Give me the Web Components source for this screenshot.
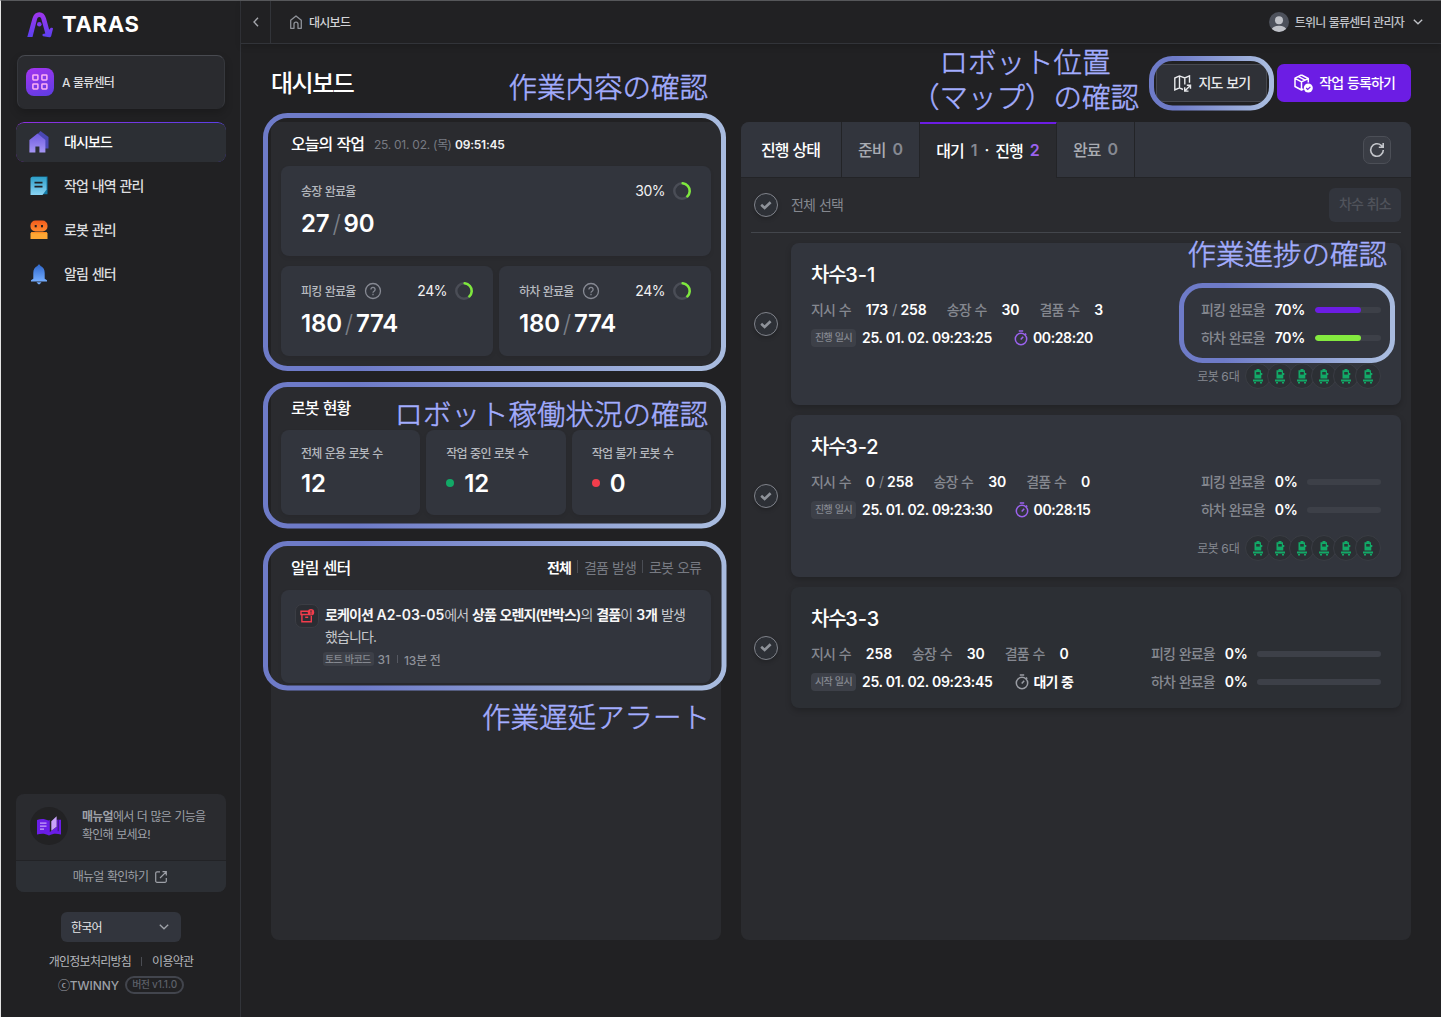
<!DOCTYPE html>
<html lang="ko">
<head>
<meta charset="utf-8">
<title>TARAS</title>
<style>
  * { box-sizing: border-box; letter-spacing: -0.062em; word-spacing: 0.06em; }
  .n { letter-spacing: -0.02em; word-spacing: 0; }
  body {
    margin: 0;
    width: 1441px;
    height: 1017px;
    overflow: hidden;
    background: #212123;
    color: #fff;
    font-family: Inter, 'Noto Sans CJK KR', sans-serif;
  }
</style>
</head>
<body>
<taras-app></taras-app>

<script>
// .n is for digits and latin, .t lifts a text a pixel inside a centred row
const BASE = `
  * { box-sizing: border-box; letter-spacing: -0.062em; word-spacing: 0.06em; }
  .n { letter-spacing: -0.005em; word-spacing: 0; }
  .t { margin-top: -2px; }
  svg { display: block; }
`;

const ICONS = {
  logo: `<svg width="27" height="26" viewBox="0 0 27 26"><defs><linearGradient id="g" x1="0" y1="0" x2="0" y2="1"><stop offset="0" stop-color="#a234ee"/><stop offset="1" stop-color="#5a41f0"/></linearGradient></defs>
    <path d="M.3 25 5.500 6.200C6.600 2.300 8.900.2 12.300.2s5.600 2.100 6.700 6l3.200 11.600 1.400-1.900c.8-.4 2.600 0 2.400.9l-1.800 7.300c-.3.9-.9 1.200-1.800 1.200l-6.200-1.100c-.9-.3-1-1.500-.3-2.100l2.400-.7L14.700 8.200C14.200 6.100 13.600 5 12.300 5s-2 1.100-2.500 3.200L5.500 25z" fill="url(#g)"/><circle cx="12.300" cy="12.300" r="2.300" fill="#7a3af0"/></svg>`,
  grid: `<svg width="16" height="16" viewBox="0 0 16 16" fill="none" stroke="#ffb0f4" stroke-width="1.500"><rect x=".9" y=".9" width="5" height="5" rx=".7"/><rect x="9.900" y=".9" width="5" height="5" rx=".7"/><rect x=".9" y="9.900" width="5" height="5" rx=".7"/><rect x="9.900" y="9.900" width="5" height="5" rx=".7"/></svg>`,
  house: `<svg width="20" height="22" viewBox="0 0 20 22"><defs><linearGradient id="g" x1="0" y1="0" x2="0" y2="1"><stop offset="0" stop-color="#6f5be0"/><stop offset="1" stop-color="#a596f4"/></linearGradient></defs><path d="M11.500 0 19.500 6v11.500h-6L5 7z" fill="#4a48b4"/><path d="M8.500 2.500.4 9v12.500h6V15.500h4v6h6V9z" fill="url(#g)"/></svg>`,
  memo: `<svg width="18" height="20" viewBox="0 0 18 20"><defs><linearGradient id="g" x1="0" y1="0" x2="0" y2="1"><stop offset="0" stop-color="#2e9fc8"/><stop offset="1" stop-color="#8ad4f4"/></linearGradient></defs><path d="M2 .5h15.500v17.800h-6z" fill="#147ba6"/><path d="M1.500 1h15v12.500l-4 5.500H.5V2z" fill="url(#g)"/><path d="M4.500 6.700h8M4.500 10.700h8" stroke="#202124" stroke-width="1.700"/></svg>`,
  bot: `<svg width="18" height="20" viewBox="0 0 18 20"><defs><linearGradient id="g" x1="0" y1="0" x2="0" y2="1"><stop offset="0" stop-color="#f25b1c"/><stop offset="1" stop-color="#ff8a30"/></linearGradient></defs><rect x=".5" y=".5" width="17" height="11" rx="5" fill="url(#g)"/><path d="M1.500 12h15l1 1.500v5.500H.5v-5.500z" fill="#ffa834"/><path d="M1.500 12h15v1.300h-15z" fill="#ff8c24"/><rect x="4.700" y="5" width="2" height="2.300" fill="#222"/><rect x="11" y="5" width="2" height="2.300" fill="#222"/></svg>`,
  bell: `<svg width="18" height="21" viewBox="0 0 18 21"><defs><linearGradient id="g" x1="0" y1="0" x2="0" y2="1"><stop offset="0" stop-color="#2f67cb"/><stop offset="1" stop-color="#74adff"/></linearGradient></defs><path d="M9 .5c.8 0 1.200.6 1.300 1.300 2.900 1.400 4.400 3.800 4.400 7v6l2.300 1.500v1.200H1v-1.200l2.300-1.500v-6c0-3.200 1.500-5.600 4.400-7C7.800 1.100 8.200.5 9 .5z" fill="url(#g)"/><path d="M6.500 18.300h5L9.700 20.300H8.300z" fill="#74adff"/></svg>`,
  book: `<svg width="24" height="20" viewBox="0 0 24 20"><path d="M0 4C4 2.500 8 2.800 11.500 4.600L12.800 4V16L19.500 11V3.700H24V18.400c-5-1-8-1-12 1.200-4-2.200-7-2.200-12-1.200z" fill="#6a1de6"/><path d="M21.200 3.700v11.500" stroke="#2b1550" stroke-width=".8"/><path d="M14.300 5.200 19.600.3v10.500l-5.300 4z" fill="#c9a3fa"/><path d="M3 7.200h6.500M3 10.200h6.500M3 13.200h4" stroke="#c9a3fa" stroke-width="1.200"/></svg>`,
  external: `<svg width="12" height="12" viewBox="0 0 12 12" fill="none" stroke="currentColor" stroke-width="1.200"><path d="M5 .8H2A1.300 1.300 0 0 0 .7 2v8A1.300 1.300 0 0 0 2 11.300h8a1.300 1.300 0 0 0 1.300-1.300V7M7.500.7h3.800v3.800M11.200.8 5 7"/></svg>`,
  down: `<svg width="10" height="6" viewBox="0 0 10 6" fill="none" stroke="currentColor" stroke-width="1.300"><path d="m.8.8 4.200 4 4.200-4"/></svg>`,
  left: `<svg width="6" height="10" viewBox="0 0 6 10" fill="none" stroke="currentColor" stroke-width="1.400"><path d="M5 .8 1 5l4 4.200"/></svg>`,
  home: `<svg width="12" height="14" viewBox="0 0 12 14" fill="none" stroke="currentColor" stroke-width="1.300" stroke-linejoin="round"><path d="M.7 5.300 6 .9l5.300 4.400v8H8V9.200a2 2 0 0 0-4 0v4.100H.7z"/></svg>`,
  user: `<svg width="20" height="20" viewBox="0 0 20 20"><clipPath id="c"><circle cx="10" cy="10" r="10"/></clipPath><g clip-path="url(#c)"><path d="M0 0h20v20H0z" fill="#4d515b"/><circle cx="10" cy="8.300" r="4" fill="#c0c2c8"/><ellipse cx="10" cy="18" rx="7.500" ry="4.300" fill="#c0c2c8"/></g></svg>`,
  map: `<svg width="18" height="17" viewBox="0 0 18 17" fill="none" stroke="#e8e9ec" stroke-width="1.400"><path d="M9 14.500 5.500 12.800.8 15V3L5.500.9 10.800 3 15.500.9V7.800M5.500 1v12M10.800 3v6.500M11 15.800l5.300-5.300M12.800 10.300h3.700v3.500M10.700 12.300v3.800h3.800"/></svg>`,
  box: `<svg width="19" height="19" viewBox="0 0 19 19"><g fill="none" stroke="#fff" stroke-width="1.500" stroke-linejoin="round"><path d="m7.500 1-6.500 3.200v8.300L7.500 16l2-1M7.500 1l6.800 3.500v4M1 4.300l6.500 3.500 6.800-3.300M7.500 7.800V16M4.500 2.700l6.700 3.500"/></g><circle cx="14.300" cy="14" r="4.500" fill="#fff"/><path d="m12.200 14 1.500 1.500 2.700-2.700" fill="none" stroke="#6c1de4" stroke-width="1.200"/></svg>`,
  help: `<svg width="18" height="18" viewBox="0 0 18 18" fill="none" stroke="#868993" stroke-width="1.300"><circle cx="9" cy="9" r="7.500"/><path d="M6.900 7.400a2.100 2.100 0 1 1 3.200 1.800c-.7.500-1.100.8-1.100 1.600"/><path d="M9 11.800v1.400"/></svg>`,
  refresh: `<svg width="16" height="16" viewBox="0 0 16 16" fill="none" stroke="#c3c5ca" stroke-width="1.600"><path d="M14.300 8A6.300 6.300 0 1 1 12.200 3.300L14 5M14.200 1v4.300H9.800"/></svg>`,
  check: `<svg width="12" height="9" viewBox="0 0 12 9" fill="none" stroke="#8e9299" stroke-width="2.600"><path d="m1.200 3.800 3.400 3.200 6-5.800"/></svg>`,
  timer: `<svg width="14" height="16" viewBox="0 0 14 16" fill="none" stroke="currentColor" stroke-width="1.500"><circle cx="7" cy="9" r="5.700"/><path d="M4.800 1h4.400M6.700 9.500l2.500-2.700M11 3.500l1.200 1.200"/></svg>`,
  missing: `<svg width="15" height="14" viewBox="0 0 15 14" fill="none" stroke="#f23d4c" stroke-width="1.400"><path d="M8 2.200H1v3.300h9M1.900 5.500v7.300h9.400V7M5.200 8.200h3"/><circle cx="11" cy="3.300" r="3.200" fill="#f23d4c" stroke="none"/><path d="M11 1.300v2.300M11 4.400v1" stroke="#2b2d33" stroke-width="1"/></svg>`,
  robot: `<svg width="10" height="15" viewBox="0 0 10 15"><path d="M3.500 0h3v1.200H8v2.800h1.300V6H8.300v3.500H1.500V1.200h2zM0 10.500h10v2H0zM1 13h2v1.500H1zM7 13h2v1.500H7z" fill="#12a967"/><path d="M3.200 3h3.600v2.600H3.200z" fill="#263a36"/></svg>`
};

// every element renders once from its own attributes and slots
class Base extends HTMLElement {
  connectedCallback() {
    if (this.shadowRoot) return;
    this.attachShadow({ mode: 'open' });
    this.shadowRoot.innerHTML = `<style>${BASE}${this.css()}</style>${this.html()}`;
  }
  css() { return ''; }
  html() { return '<slot></slot>'; }
  at(name, fallback = '') { return this.getAttribute(name) || fallback; }
}

class UiIcon extends Base {
  css() { return ':host { display: block; flex: none; }'; }
  html() { return ICONS[this.at('name')]; }
}

class NavItem extends Base {
  css() {
    return `
      :host { display: flex; align-items: center; height: 40px; padding-left: 13px; border-radius: 8px; font-size: 14px; font-weight: 500; color: #dcdddf; position: relative; }
      :host([active]) { background: #2c2f34; color: #fff; overflow: hidden; }
      :host([active])::before { content: ''; position: absolute; inset: 0; border-radius: 8px; padding-top: 1px; background: linear-gradient(90deg, #8f2fe0, #5b3fe6);
        mask: linear-gradient(#000 0 0) content-box exclude, linear-gradient(#000 0 0); }
      .ic { width: 20px; display: flex; justify-content: center; margin-right: 15px; }
    `;
  }
  html() { return `<span class="ic"><ui-icon name="${this.at('icon')}"></ui-icon></span><span class="t"><slot></slot></span>`; }
}

class SideBar extends Base {
  css() {
    return `
      :host { display: flex; flex-direction: column; width: 240px; border-right: 1px solid #323439; padding: 10px 14px 0 15px; }
      .brand { display: flex; align-items: center; height: 27px; margin-left: 11px; gap: 8px; }
      .word { font: 700 22px/26px Inter, sans-serif; letter-spacing: 0.7px; margin-top: -2px; }
      .site { display: flex; align-items: center; height: 54px; margin: 17px 1px 0; padding-left: 8px; gap: 8px; border: 1px solid #36383d; border-top-color: #484a50; border-bottom-color: #2b2c30; border-radius: 8px;
        background: #2a2b2f; font-size: 12px; font-weight: 500; color: #dcdddf; box-shadow: 0 4px 8px #0003; }
      .sq { width: 28px; height: 28px; border-radius: 8px; display: grid; place-items: center; background: linear-gradient(160deg, #a534f0, #5b3de2); }
      nav { display: flex; flex-direction: column; gap: 4px; margin-top: 13px; }
      .fill { flex: 1; }
      .manual { border-radius: 8px; overflow: hidden; background: #2a2b2f; font-size: 12px; color: #9da0a7; }
      .top { display: flex; align-items: center; height: 66px; padding-left: 14px; gap: 14px; line-height: 18px; padding-bottom: 2px; }
      .disc { width: 38px; height: 38px; border-radius: 50%; background: #222224; display: grid; place-items: center; }
      .more { height: 32px; border-top: 1px solid #222326; background: #2c2f34; display: flex; align-items: center; justify-content: center; gap: 7px; padding-right: 2px; }
      .lang { align-self: center; width: 120px; height: 30px; margin: 20px 0 0; padding: 0 12px 0 10px; border-radius: 6px; background: #32353d; display: flex; align-items: center; justify-content: space-between; font-size: 12px; color: #e4e5e7; }
      .lang ui-icon { color: #a0a3aa; }
      .links { display: flex; justify-content: center; align-items: center; gap: 10px; height: 18px; margin-top: 10px; font-size: 12px; color: #b4b6bb; }
      .links i { width: 1px; height: 9px; background: #4a4c52; }
      .foot { display: flex; justify-content: center; align-items: center; gap: 6px; height: 18px; margin: 6px 0 23px; font-size: 12px; color: #9c9fa6; font-weight: 500; }
      .pill { height: 18px; line-height: 13px; padding: 0 5px; border: 2px solid #42454d; border-radius: 9px; font-size: 10px; color: #5d6069; }
    `;
  }
  html() {
    return `
      <div class="brand"><ui-icon name="logo"></ui-icon><span class="word">TARAS</span></div>
      <div class="site"><span class="sq"><ui-icon name="grid"></ui-icon></span><span class="t">A 물류센터</span></div>
      <nav>
        <nav-item icon="house" active>대시보드</nav-item>
        <nav-item icon="memo">작업 내역 관리</nav-item>
        <nav-item icon="bot">로봇 관리</nav-item>
        <nav-item icon="bell">알림 센터</nav-item>
      </nav>
      <div class="fill"></div>
      <div class="manual">
        <div class="top"><span class="disc"><ui-icon name="book"></ui-icon></span><span><b>매뉴얼</b>에서 더 많은 기능을<br>확인해 보세요!</span></div>
        <div class="more"><span class="t">매뉴얼 확인하기</span><ui-icon name="external"></ui-icon></div>
      </div>
      <div class="lang"><span class="t">한국어</span><ui-icon name="down"></ui-icon></div>
      <div class="links"><span class="t">개인정보처리방침</span><i></i><span class="t">이용약관</span></div>
      <div class="foot"><span class="n t">ⓒTWINNY</span><span class="pill">버전 <span class="n">v1.1.0</span></span></div>
    `;
  }
}

class TopBar extends Base {
  css() {
    return `
      :host { display: flex; align-items: center; height: 43px; border-bottom: 1px solid #323439; box-shadow: 0 3px 6px #0002; font-size: 12px; font-weight: 500; color: #d3d4d7; flex: none; }
      .back { width: 30px; height: 42px; border-right: 1px solid #323439; display: grid; place-items: center; color: #a5a7ad; }
      .crumb { display: flex; align-items: center; gap: 7px; margin-left: 19px; }
      .crumb ui-icon { color: #8f9299; }
      .me { margin-left: auto; display: flex; align-items: center; gap: 6px; margin-right: 18px; color: #c0c2c7; }
      .me ui-icon:last-child { margin-left: 3px; }
    `;
  }
  html() {
    return `
      <div class="back"><ui-icon name="left"></ui-icon></div>
      <div class="crumb"><ui-icon name="home"></ui-icon><span class="t">대시보드</span></div>
      <div class="me"><ui-icon name="user"></ui-icon><span class="t">트위니 물류센터 관리자</span><ui-icon name="down"></ui-icon></div>
    `;
  }
}

class UiButton extends Base {
  css() {
    return `
      :host { display: flex; align-items: center; height: 38px; border-radius: 7px; font-size: 14px; font-weight: 500; padding: 0 16px 0 17px; gap: 6px; background: #2f3137; border: 1px solid #46484f; color: #e8e9eb; }
      :host([primary]) { background: #6c1de4; border: 0; color: #fff; }
    `;
  }
  html() { return `<ui-icon name="${this.at('icon')}"></ui-icon><span class="t"><slot></slot></span>`; }
}

class PanelBox extends Base {
  css() {
    return `
      :host { display: flex; flex-direction: column; background: #2a2b2f; border-radius: 8px; padding: 0 10px 10px; }
      header { display: flex; align-items: center; height: 44px; padding: 0 10px 2px; gap: 10px; font-size: 16px; font-weight: 500; flex: none; }
      :host([tall]) header { height: 45px; }
      .right { margin-left: auto; }
    `;
  }
  html() { return `<header><span>${this.at('heading')}</span><slot name="sub"></slot><span class="right"><slot name="tools"></slot></span></header><slot></slot>`; }
}

class PercentRing extends Base {
  css() { return ':host { display: flex; align-items: center; gap: 8px; font-size: 14px; line-height: 18px; } .n { letter-spacing: -0.035em; }'; }
  html() {
    const v = +this.at('value');
    const len = 2 * Math.PI * 7.7;
    return `<span class="n">${v}%</span><svg width="18" height="18" viewBox="0 0 18 18" fill="none" stroke-width="2.500"><circle cx="9" cy="9" r="7.700" stroke="#4a4d56"/>
      <circle cx="9" cy="9" r="7.700" stroke="#7ee83c" stroke-linecap="round" stroke-dasharray="${len * this.at('arc')} 99" transform="rotate(-85 9 9)"/></svg>`;
  }
}

class StatTile extends Base {
  css() {
    return `
      :host { display: block; flex: 1; min-width: 0; background: #32353d; border-radius: 8px; padding: 15px 20px 0; height: 90px; box-shadow: 0 2px 4px #0001; }
      :host([short]) { height: 85px; padding-top: 13px; }
      .row { display: flex; align-items: center; height: 20px; font-size: 12px; color: #b5b8be; font-weight: 500; gap: 8px; }
      percent-ring { margin-left: auto; color: #f2f2f3; font-weight: 400; }
      .num { display: flex; align-items: center; height: 30px; margin-top: 7px; font-size: 24px; font-weight: 600; }
      .num * { letter-spacing: -0.008em; }
      :host([short]) .num { margin-top: 5px; }
      em { font-style: normal; font-weight: 300; color: #7c8089; padding: 0 3px; }
      .dot { width: 8px; height: 8px; border-radius: 50%; margin: 0 10px 0 0; }
    `;
  }
  html() {
    const [a, b] = this.at('value').split('/');
    const dot = this.at('dot');
    return `
      <div class="row"><span class="t">${this.at('label')}</span>${this.hasAttribute('help') ? '<ui-icon name="help"></ui-icon>' : ''}
        ${this.at('percent') ? `<percent-ring value="${this.at('percent')}" arc="${this.at('arc')}"></percent-ring>` : ''}</div>
      <div class="num">${dot ? `<i class="dot" style="background:${dot}"></i>` : ''}<span>${a}</span>${b ? `<em>/</em><span>${b}</span>` : ''}</div>
    `;
  }
}

class AlertTabs extends Base {
  css() {
    return `
      :host { display: flex; align-items: center; gap: 6px; font-size: 14px; font-weight: 400; color: #777a82; }
      b { color: #fff; font-weight: 600; }
      i { width: 1px; height: 13px; background: #4a4d54; }
    `;
  }
  html() { return '<b>전체</b><i></i><span>결품 발생</span><i></i><span>로봇 오류</span>'; }
}

class AlertItem extends Base {
  css() {
    return `
      :host { display: flex; height: 93px; border-radius: 8px; background: #32353d; padding: 14px 14px 0; gap: 6px; box-shadow: 0 2px 4px #0001; }
      .ic { width: 24px; height: 24px; border: 1px solid #3b3d44; border-radius: 7px; background: #2b2d33; display: grid; place-items: center; flex: none; }
      p { margin: 0; font-size: 14px; line-height: 22px; color: #c6c8cc; white-space: nowrap; }
      b { color: #f6f6f7; font-weight: 600; }
      .meta { display: flex; align-items: center; font-size: 12px; height: 18px; color: #8e9199; margin: 2px 0 0 -2px; font-weight: 500; }
      .tag { font-size: 10px; line-height: 14px; padding: 0 3px 0 2px; border-radius: 3px; background: #3d4048; margin-right: 4px; color: #858890; }
      .meta i { width: 1px; height: 8px; background: #555861; margin: 0 6px 0 7px; }
    `;
  }
  html() {
    return `
      <span class="ic"><ui-icon name="missing"></ui-icon></span>
      <div>
        <p><b>로케이션 <span class="n">A2-03-05</span></b>에서 <b>상품 오렌지(반박스)</b>의 <b>결품</b>이 <b><span class="n">3</span>개</b> 발생<br>했습니다.</p>
        <div class="meta"><span class="tag">토트 바코드</span><span class="n">31</span><i></i><span><span class="n">13</span>분 전</span></div>
      </div>
    `;
  }
}

class CheckCircle extends Base {
  css() { return ':host { display: grid; place-items: center; width: 24px; height: 24px; border: 1px solid #80838b; border-radius: 50%; background: #2d3036; box-shadow: 0 2px 4px #0003; flex: none; }'; }
  html() { return '<ui-icon name="check"></ui-icon>'; }
}

class StatusTabs extends Base {
  css() {
    return `
      :host { display: flex; height: 56px; font-size: 16px; font-weight: 500; flex: none; border-radius: 8px 8px 0 0; overflow: hidden; }
      div { display: flex; align-items: center; justify-content: center; background: #32353d; border-right: 1px solid #232427; border-bottom: 1px solid #232427; color: #a9acb3; gap: 7px; padding-bottom: 1px; }
      div .n { color: #868992; font-weight: 600; }
      .title { width: 101px; color: #fff; padding-right: 1px; }
      .a { width: 78px; }
      .on { width: 137px; background: #2a2b2f; border-top: 3px solid #6c1de4; border-bottom: 0; color: #fff; padding: 0 0 2px; margin-top: -1px; height: 57px; }
      .on .p { color: #9b62ee; }
      .rest { flex: 1; justify-content: flex-end; border-right: 0; padding: 1px 20px 0 0; }
      .re { width: 28px; height: 28px; border: 1px solid #4c4f57; border-radius: 7px; background: #3a3d45; display: grid; place-items: center; }
    `;
  }
  html() {
    return `
      <div class="title">진행 상태</div>
      <div class="a">준비<span class="n">0</span></div>
      <div class="on"><span>대기</span><span class="n">1</span><span>·</span><span>진행</span><span class="n p">2</span></div>
      <div class="a">완료<span class="n">0</span></div>
      <div class="rest"><span class="re"><ui-icon name="refresh"></ui-icon></span></div>
    `;
  }
}

class RateBar extends Base {
  css() {
    return `
      :host { display: flex; align-items: center; gap: 10px; height: 28px; font-size: 14px; color: #858890; font-weight: 500; }
      b { color: #fff; font-weight: 600; }
      b.n { letter-spacing: -0.025em; }
      .bar { flex: 1; height: 6px; border-radius: 3px; background: #3d4048; overflow: hidden; }
      .bar i { display: block; height: 6px; border-radius: 3px; }
    `;
  }
  html() {
    return `<span class="t">${this.at('label')}</span><b class="n t">${this.at('value')}%</b><span class="bar"><i style="width:${this.at('value')}%;background:${this.at('color', 'none')}"></i></span>`;
  }
}

class WaveCard extends Base {
  css() {
    return `
      :host { display: flex; align-items: center; gap: 13px; height: 162px; flex: none; padding-left: 3px; }
      :host([wait]) { height: 121px; }
      .card { flex: 1; height: 100%; display: flex; justify-content: space-between; background: #32353d; border-radius: 8px; padding: 17px 20px 0; box-shadow: 0 3px 6px #0003; }
      :host([wait]) .card { background: #2c2f34; }
      h3 { margin: 0; font-size: 20px; line-height: 30px; font-weight: 500; margin-bottom: 5px; }
      .row { display: flex; align-items: center; height: 28px; font-size: 14px; color: #858890; font-weight: 500; white-space: nowrap; }
      .row b { color: #fff; font-weight: 600; margin: 0 20px 0 15px; }
      .row em { font-style: normal; font-weight: 400; color: #858890; margin: 0 4px; }
      .tag { font-size: 10px; line-height: 17px; padding: 0 4px 1px; margin-top: 2px; border-radius: 4px; background: #3d4048; color: #858890; }
      .row .date { margin: 0 22px 0 6px; letter-spacing: -0.0205em; }
      .row .time { margin: 0 0 0 5px; }
      .row .time.n { letter-spacing: -0.027em; }
      .timer { color: #9b62ee; margin-top: 1px; }
      :host([wait]) .timer { color: #9a9da4; }
      .right { width: 180px; padding-top: 36px; }
      :host([wait]) .right { width: 230px; }
      .bots { display: flex; align-items: center; justify-content: flex-end; font-size: 12px; color: #858890; margin: 11px 0 0 -10px; height: 26px; }
      .bots > span:first-child { margin-right: 6px; }
      .bot { width: 26px; height: 26px; border-radius: 50%; border: 1px solid #3a3d44; background: #2c2f34; display: grid; place-items: center; margin-left: -4px; flex: none; }
      .bot:nth-child(2) { margin-left: 0; }
    `;
  }
  html() {
    const wait = this.hasAttribute('wait');
    const [done, all] = this.at('orders').split('/');
    const rate = this.at('rate', '0');
    return `
      <check-circle></check-circle>
      <div class="card">
        <div>
          <h3>차수<span class="n">${this.at('no')}</span></h3>
          <div class="row">지시 수<b class="n">${done}${all ? `<em>/</em>${all}` : ''}</b>송장 수<b class="n">30</b>결품 수<b class="n">${this.at('missing')}</b></div>
          <div class="row"><span class="tag">${wait ? '시작 일시' : '진행 일시'}</span><b class="n date">${this.at('date')}</b><ui-icon class="timer" name="timer"></ui-icon><b class="time ${wait ? '' : 'n'}">${this.at('time')}</b></div>
        </div>
        <div class="right">
          <rate-bar label="피킹 완료율" value="${rate}" color="#6c1de4"></rate-bar>
          <rate-bar label="하차 완료율" value="${rate}" color="#84ea3f"></rate-bar>
          ${wait ? '' : `<div class="bots"><span class="t">로봇 <span class="n">6</span>대</span>${'<span class="bot"><ui-icon name="robot"></ui-icon></span>'.repeat(6)}</div>`}
        </div>
      </div>
    `;
  }
}

class ProgressPanel extends Base {
  css() {
    return `
      :host { display: flex; flex-direction: column; width: 670px; height: 818px; background: #2a2b2f; border-radius: 8px; }
      .all { display: flex; align-items: center; height: 55px; margin: 0 10px; padding-left: 3px; border-bottom: 1px solid #43464c; gap: 13px; font-size: 14px; color: #85888f; flex: none; }
      .cancel { margin-left: auto; width: 72px; height: 34px; line-height: 32px; text-align: center; border-radius: 6px; background: #32353d; color: #50535b; font-weight: 500; }
      .list { display: flex; flex-direction: column; gap: 10px; padding: 10px 10px 0; }
    `;
  }
  html() {
    return `
      <status-tabs></status-tabs>
      <div class="all"><check-circle></check-circle><span class="t">전체 선택</span><span class="cancel">차수 취소</span></div>
      <div class="list">
        <wave-card no="3-1" orders="173/258" missing="3" date="25. 01. 02. 09:23:25" time="00:28:20" rate="70"></wave-card>
        <wave-card no="3-2" orders="0/258" missing="0" date="25. 01. 02. 09:23:30" time="00:28:15"></wave-card>
        <wave-card wait no="3-3" orders="258" missing="0" date="25. 01. 02. 09:23:45" time="대기 중"></wave-card>
      </div>
    `;
  }
}

// overlay outline and its caption, placed on top of the page
class CalloutFrame extends Base {
  css() {
    return `
      :host { position: absolute; display: block; }
      svg { overflow: visible; }
    `;
  }
  html() {
    const [x, y, w, h, r] = this.at('box').split(' ').map(Number);
    this.style.cssText = `left:${x}px;top:${y}px;width:${w}px;height:${h}px`;
    return `<svg width="${w}" height="${h}"><defs><linearGradient id="g"><stop offset=".2" stop-color="#6e7bc8"/><stop offset=".95" stop-color="#a8bbdf"/></linearGradient></defs>
      <rect x="2.500" y="2.500" width="${w - 5}" height="${h - 5}" rx="${r}" fill="none" stroke="url(#g)" stroke-width="5"/></svg>`;
  }
}

class CalloutLabel extends Base {
  css() {
    return `
      :host { position: absolute; display: block; text-align: center; white-space: nowrap; color: #a3adff; font: 300 28.500px/35px 'Noto Sans CJK JP', sans-serif; -webkit-text-stroke: 0.5px #a3adff; }
      slot { letter-spacing: 0; }
    `;
  }
  html() {
    const [right, top] = this.at('pos').split(' ');
    this.style.cssText = `right:${1441 - right}px;top:${top}px`;
    return '<slot></slot>';
  }
}

class TarasApp extends Base {
  css() {
    return `
      :host { display: flex; width: 1441px; height: 1017px; border-top: 1px solid #58595c; border-left: 1px solid #e4e4e4; position: relative; }
      main { flex: 1; display: flex; flex-direction: column; min-width: 0; }
      .head { display: flex; align-items: center; gap: 10px; height: 78px; padding: 0 30px; flex: none; }
      h1 { margin: 2px auto 0 0; font-size: 24px; line-height: 36px; font-weight: 500; }
      .cols { display: flex; gap: 20px; padding: 0 30px; }
      .left { display: flex; flex-direction: column; gap: 20px; width: 450px; height: 818px; }
      .tiles { display: flex; gap: 6px; }
      .tiles + .tiles { margin-top: 10px; }
      .now { font-size: 12px; color: #777a82; font-weight: 400; }
      .now .n { letter-spacing: -0.02em; }
      .now b { color: #f2f2f3; font-weight: 600; }
      .grow { flex: 1; }
      .over { position: absolute; left: -1px; top: -1px; width: 1441px; height: 1017px; }
    `;
  }
  html() {
    return `
      <side-bar></side-bar>
      <main>
        <top-bar></top-bar>
        <div class="head">
          <h1>대시보드</h1>
          <ui-button icon="map">지도 보기</ui-button>
          <ui-button icon="box" primary>작업 등록하기</ui-button>
        </div>
        <div class="cols">
          <div class="left">
            <panel-box heading="오늘의 작업">
              <span slot="sub" class="now"><span class="n">25. 01. 02. (</span>목<span class="n">)</span> <b class="n">09:51:45</b></span>
              <div class="tiles"><stat-tile label="송장 완료율" value="27/90" percent="30" arc="0.36"></stat-tile></div>
              <div class="tiles">
                <stat-tile label="피킹 완료율" value="180/774" percent="24" arc="0.36" help></stat-tile>
                <stat-tile label="하차 완료율" value="180/774" percent="24" arc="0.36" help></stat-tile>
              </div>
            </panel-box>
            <panel-box heading="로봇 현황">
              <div class="tiles">
                <stat-tile short label="전체 운용 로봇 수" value="12"></stat-tile>
                <stat-tile short label="작업 중인 로봇 수" value="12" dot="#12a967"></stat-tile>
                <stat-tile short label="작업 불가 로봇 수" value="0" dot="#f23d4c"></stat-tile>
              </div>
            </panel-box>
            <panel-box class="grow" tall heading="알림 센터">
              <alert-tabs slot="tools"></alert-tabs>
              <alert-item></alert-item>
            </panel-box>
          </div>
          <progress-panel></progress-panel>
        </div>
      </main>
      <div class="over">
        <callout-frame box="263 112.500 463 258 22"></callout-frame>
        <callout-frame box="263 382 463 146.500 22"></callout-frame>
        <callout-frame box="262.500 540.500 463.500 149.500 22"></callout-frame>
        <callout-frame box="1149 56 125 54.500 21"></callout-frame>
        <callout-frame box="1179 282.500 216 80 21"></callout-frame>
        <callout-label pos="708 68">作業内容の確認</callout-label>
        <callout-label pos="708 395">ロボット稼働状況の確認</callout-label>
        <callout-label pos="710 698">作業遅延アラート</callout-label>
        <callout-label pos="1139 43">ロボット位置<br>（マップ）の確認</callout-label>
        <callout-label pos="1387 235">作業進捗の確認</callout-label>
      </div>
    `;
  }
}

customElements.define('ui-icon', UiIcon);
customElements.define('nav-item', NavItem);
customElements.define('side-bar', SideBar);
customElements.define('top-bar', TopBar);
customElements.define('ui-button', UiButton);
customElements.define('panel-box', PanelBox);
customElements.define('percent-ring', PercentRing);
customElements.define('stat-tile', StatTile);
customElements.define('alert-tabs', AlertTabs);
customElements.define('alert-item', AlertItem);
customElements.define('check-circle', CheckCircle);
customElements.define('status-tabs', StatusTabs);
customElements.define('rate-bar', RateBar);
customElements.define('wave-card', WaveCard);
customElements.define('progress-panel', ProgressPanel);
customElements.define('callout-frame', CalloutFrame);
customElements.define('callout-label', CalloutLabel);
customElements.define('taras-app', TarasApp);
</script>
</body>
</html>
